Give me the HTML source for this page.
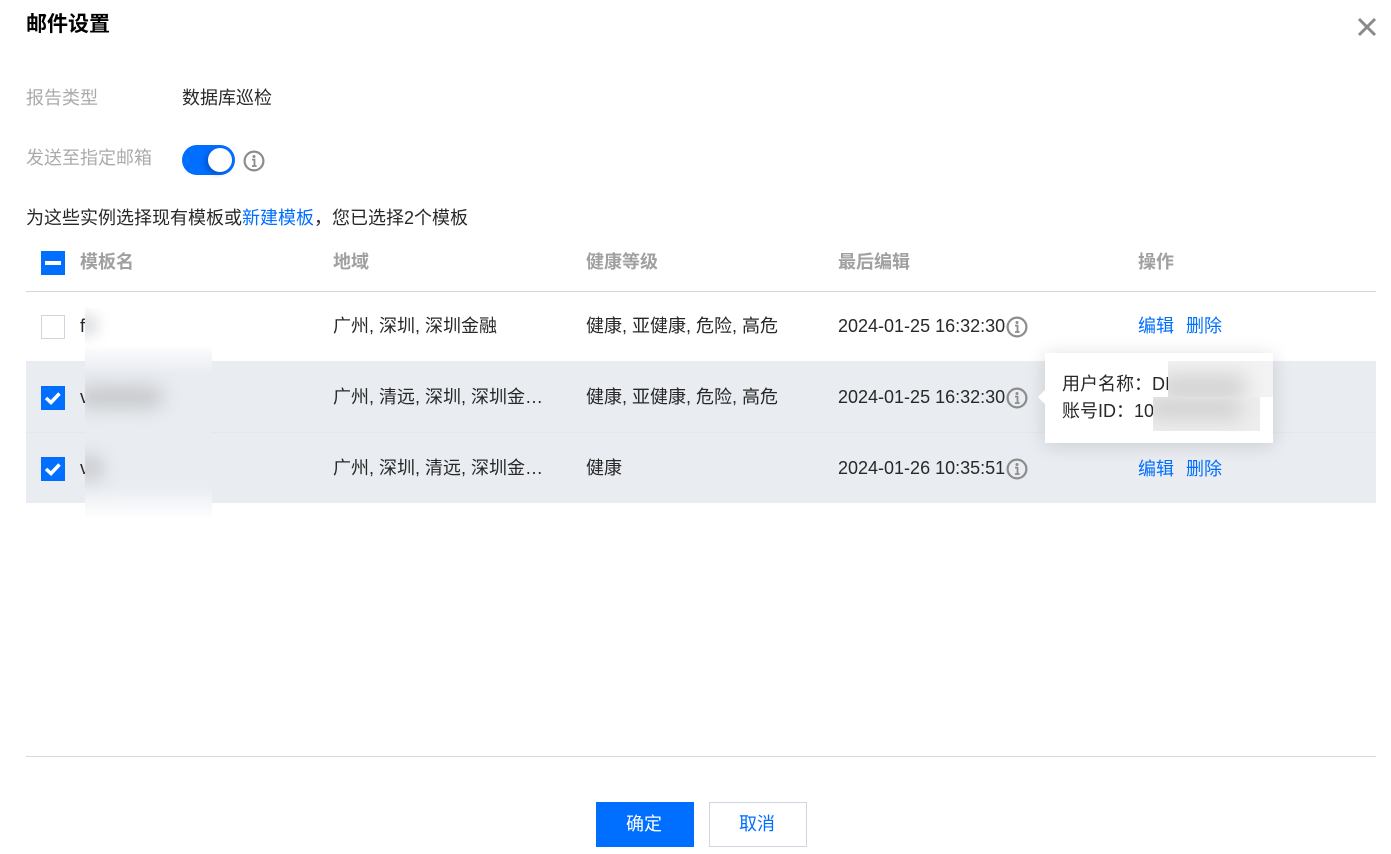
<!DOCTYPE html>
<html lang="zh-CN"><head><meta charset="utf-8"><title>邮件设置</title>
<style>
html,body{margin:0;padding:0;background:#fff}
#p{position:relative;width:1391px;height:854px;overflow:hidden;background:#fff;font-family:"Liberation Sans","Noto Sans CJK SC",sans-serif;font-size:18px;color:#282828}
.t{position:absolute;white-space:nowrap;line-height:24px;height:24px}
.g{color:#ababab}
.h{color:#a0a0a0;font-weight:700}
.b{color:#006eff}
.r{position:absolute;left:26px;width:1350px}
.c{position:absolute;left:41px;width:24px;height:24px;background:#006eff}
.i{position:absolute;width:22px;height:22px}
svg{display:block}
</style></head><body><div id="p">
<div class="t" style="left:26px;top:13px;font-size:21px;font-weight:700;color:#000">邮件设置</div>
<svg style="position:absolute;left:1357px;top:17px" width="20" height="20"><path d="M2 2L18 18M18 2L2 18" stroke="#8a8a8a" stroke-width="3" fill="none"/></svg>

<div class="t g" style="left:26px;top:86px">报告类型</div>
<div class="t" style="left:182px;top:86px">数据库巡检</div>
<div class="t g" style="left:26px;top:146px">发送至指定邮箱</div>
<div style="position:absolute;left:182px;top:145px;width:53px;height:30px;border-radius:15px;background:#006eff"></div>
<div style="position:absolute;left:208px;top:148px;width:24px;height:24px;border-radius:50%;background:#fff;box-shadow:-3px 2px 5px rgba(0,40,110,.35)"></div>
<svg class="i" style="left:243px;top:150px" viewBox="0 0 22 22"><circle cx="11" cy="11" r="9.4" fill="none" stroke="#8c8c8c" stroke-width="2.2"/><circle cx="11" cy="6.5" r="1.5" fill="#8c8c8c"/><path d="M9 9.6H11.5V15.6M9 16H13.6" fill="none" stroke="#8c8c8c" stroke-width="1.8"/></svg>

<div class="t" style="left:26px;top:206px">为这些实例选择现有模板或<span class="b">新建模板</span>，您已选择2个模板</div>

<div class="c" style="top:251px"><div style="position:absolute;left:4px;top:10px;width:16px;height:4px;background:#fff"></div></div>
<div class="t h" style="left:80px;top:250px">模板名</div>
<div class="t h" style="left:333px;top:250px">地域</div>
<div class="t h" style="left:586px;top:250px">健康等级</div>
<div class="t h" style="left:838px;top:250px">最后编辑</div>
<div class="t h" style="left:1138px;top:250px">操作</div>
<div class="r" style="top:291px;height:1px;background:#d3d5da"></div>

<div class="r" style="top:361px;height:142px;background:#e9ecf1"></div>
<div class="r" style="top:432px;height:1px;background:#e4e7ed"></div>

<div class="c" style="top:315px;box-sizing:border-box;background:#fff;border:1px solid #cfd5de"></div>
<div class="t" style="left:80px;top:314px">f</div>
<div class="t" style="left:333px;top:314px">广州, 深圳, 深圳金融</div>
<div class="t" style="left:586px;top:314px">健康, 亚健康, 危险, 高危</div>
<div class="t" style="left:838px;top:314px">2024-01-25 16:32:30</div>
<svg class="i" style="left:1006px;top:316px" viewBox="0 0 22 22"><circle cx="11" cy="11" r="9.4" fill="none" stroke="#8c8c8c" stroke-width="2.2"/><circle cx="11" cy="6.5" r="1.5" fill="#8c8c8c"/><path d="M9 9.6H11.5V15.6M9 16H13.6" fill="none" stroke="#8c8c8c" stroke-width="1.8"/></svg>
<div class="t b" style="left:1138px;top:314px">编辑</div>
<div class="t b" style="left:1186px;top:314px">删除</div>

<div class="c" style="top:386px"><svg width="24" height="24"><path d="M5 12L10 16.5L18.5 7.5" fill="none" stroke="#fff" stroke-width="3.5"/></svg></div>
<div class="t" style="left:80px;top:385px">v</div>
<div class="t" style="left:333px;top:385px">广州, 清远, 深圳, 深圳金…</div>
<div class="t" style="left:586px;top:385px">健康, 亚健康, 危险, 高危</div>
<div class="t" style="left:838px;top:385px">2024-01-25 16:32:30</div>
<svg class="i" style="left:1006px;top:387px" viewBox="0 0 22 22"><circle cx="11" cy="11" r="9.4" fill="none" stroke="#8c8c8c" stroke-width="2.2"/><circle cx="11" cy="6.5" r="1.5" fill="#8c8c8c"/><path d="M9 9.6H11.5V15.6M9 16H13.6" fill="none" stroke="#8c8c8c" stroke-width="1.8"/></svg>

<div class="c" style="top:457px"><svg width="24" height="24"><path d="M5 12L10 16.5L18.5 7.5" fill="none" stroke="#fff" stroke-width="3.5"/></svg></div>
<div class="t" style="left:80px;top:456px">v</div>
<div class="t" style="left:333px;top:456px">广州, 深圳, 清远, 深圳金…</div>
<div class="t" style="left:586px;top:456px">健康</div>
<div class="t" style="left:838px;top:456px">2024-01-26 10:35:51</div>
<svg class="i" style="left:1006px;top:458px" viewBox="0 0 22 22"><circle cx="11" cy="11" r="9.4" fill="none" stroke="#8c8c8c" stroke-width="2.2"/><circle cx="11" cy="6.5" r="1.5" fill="#8c8c8c"/><path d="M9 9.6H11.5V15.6M9 16H13.6" fill="none" stroke="#8c8c8c" stroke-width="1.8"/></svg>
<div class="t b" style="left:1138px;top:457px">编辑</div>
<div class="t b" style="left:1186px;top:457px">删除</div>

<!-- blurred patch over names -->
<div style="position:absolute;left:85px;top:308px;width:127px;height:212px;overflow:hidden;background:linear-gradient(to bottom,#fff 0,#fff 38px,#f6f7f9 46px,#e9ecf1 66px,#e9ecf1 178px,#fff 212px)">
  <div style="position:absolute;left:-12px;top:5px;width:26px;height:24px;border-radius:50%;background:#dfe0e2;filter:blur(7px)"></div>
  <div style="position:absolute;left:-8px;top:78px;width:86px;height:22px;border-radius:11px;background:#c6c8ca;filter:blur(9px)"></div>
  <div style="position:absolute;left:-12px;top:146px;width:32px;height:28px;border-radius:50%;background:#cdcfd2;filter:blur(8px)"></div>
</div>

<!-- tooltip -->
<div style="position:absolute;left:1045px;top:353px;width:228px;height:90px;background:#fff;box-shadow:0 2px 18px rgba(0,0,0,.14)"></div>
<div style="position:absolute;left:1040px;top:392px;width:10px;height:10px;background:#fff;transform:rotate(45deg)"></div>
<div class="t" style="left:1062px;top:372px">用户名称：DI</div>
<div class="t" style="left:1062px;top:399px">账号ID：10</div>
<div style="position:absolute;left:1168px;top:361px;width:105px;height:36px;overflow:hidden;background:#f3f3f3">
  <div style="position:absolute;left:-8px;top:14px;width:85px;height:26px;background:#cfcfcf;filter:blur(11px)"></div>
</div>
<div style="position:absolute;left:1153px;top:397px;width:107px;height:34px;overflow:hidden;background:#eeeeee">
  <div style="position:absolute;left:-6px;top:0;width:95px;height:22px;background:#d0d0d0;filter:blur(10px)"></div>
</div>

<div class="r" style="top:756px;height:1px;background:#d7d9df"></div>
<div class="t" style="left:595px;top:802px;width:98px;height:45px;line-height:44px;text-align:center;color:#fff;background:linear-gradient(to right,#006eff,#006eff);background-size:98px 45px;background-position:1px 0;background-repeat:no-repeat;padding-right:1px">确定</div>
<div class="t b" style="left:709px;top:802px;width:98px;height:45px;line-height:43px;text-indent:-2px;text-align:center;box-sizing:border-box;border:1px solid #cfd5e3;background:#fff">取消</div>
</div></body></html>
